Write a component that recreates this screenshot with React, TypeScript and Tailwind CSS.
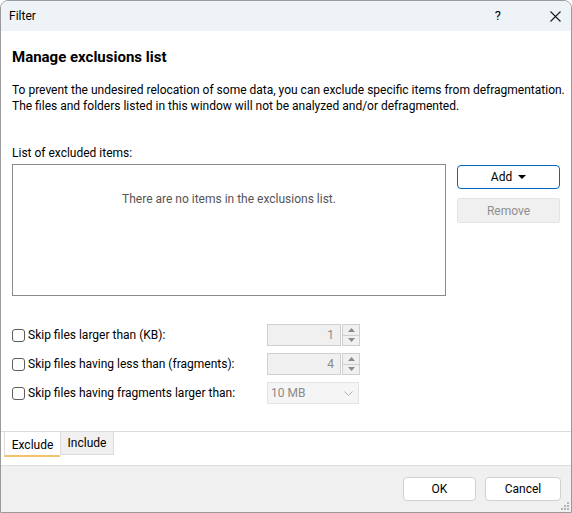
import React from "react";

const font = { fontFamily: '"Segoe UI", Roboto, "Noto Sans", sans-serif' };

function Check({ label }: { label: string }) {
  return (
    <div className="flex items-center h-[22px]">
      <div className="w-[13px] h-[13px] border border-[#5e5e5e] rounded-[3px] bg-white" />
      <span className="ml-[3px] text-[12px] text-black leading-[16px]">{label}</span>
    </div>
  );
}

function Spin({ value }: { value: string }) {
  return (
    <div className="flex h-[22px]">
      <div className="w-[74px] h-[22px] border border-[#cfcfcf] bg-[#f0f0f0] flex items-center justify-end pr-[6px] text-[12px] text-[#8a8a8a]">
        {value}
      </div>
      <div className="w-[18px] h-[22px] ml-[1px] border border-[#cfcfcf] bg-[#f0f0f0] flex flex-col">
        <div className="flex-1 flex items-center justify-center border-b border-[#cfcfcf]">
          <svg width="7" height="4" viewBox="0 0 7 4"><path d="M0 4 L3.5 0 L7 4 Z" fill="#8a8a8a" /></svg>
        </div>
        <div className="flex-1 flex items-center justify-center">
          <svg width="7" height="4" viewBox="0 0 7 4"><path d="M0 0 L3.5 4 L7 0 Z" fill="#8a8a8a" /></svg>
        </div>
      </div>
    </div>
  );
}

export default function App() {
  return (
    <div style={font} className="w-[572px] h-[513px] flex flex-col border border-[#9a9a9a] rounded-t-[8px] overflow-hidden bg-white text-black">
      {/* Title bar */}
      <div className="h-[30px] bg-[#eef3f8] flex items-center pl-[8px] shrink-0">
        <span className="text-[12px]">Filter</span>
        <span className="ml-auto text-[13px] mr-[49px]">?</span>
        <svg width="11" height="11" viewBox="0 0 11 11" className="mr-[10px]">
          <path d="M0.5 0.5 L10.5 10.5 M10.5 0.5 L0.5 10.5" stroke="#1a1a1a" strokeWidth="1.1" />
        </svg>
      </div>

      {/* Content */}
      <div className="flex-1 flex flex-col pl-[11px] pr-[11px]">
        <div className="mt-[16px] text-[15px] font-bold leading-[20px]">Manage exclusions list</div>
        <div className="mt-[15px] text-[12px] leading-[16px] whitespace-nowrap">
          <div>To prevent the undesired relocation of some data, you can exclude specific items from defragmentation.</div>
          <div>The files and folders listed in this window will not be analyzed and/or defragmented.</div>
        </div>
        <div className="mt-[31px] text-[12px] leading-[16px]">List of excluded items:</div>
        <div className="mt-[3px] flex">
          <div className="w-[435px] h-[132px] border border-[#8a8a8a] flex justify-center pt-[26px]">
            <span className="text-[12px] leading-[16px] text-[#555555]">There are no items in the exclusions list.</span>
          </div>
          <div className="ml-[11px] flex flex-col">
            <div className="mt-[1px] w-[103px] h-[24px] border border-[#0067c0] rounded-[4px] flex items-center justify-center text-[12px]">
              Add
              <svg width="8" height="4" viewBox="0 0 8 4" className="ml-[6px]"><path d="M0 0 L8 0 L4 4 Z" fill="#000" /></svg>
            </div>
            <div className="mt-[9px] w-[103px] h-[25px] border border-[#e3e3e3] bg-[#f0f0f0] rounded-[2px] flex items-center justify-center text-[12px] text-[#8f8f8f]">
              Remove
            </div>
          </div>
        </div>

        <div className="mt-[28px] flex flex-col gap-[7px]">
          <div className="flex items-center">
            <div className="w-[255px]"><Check label="Skip files larger than (KB):" /></div>
            <Spin value="1" />
          </div>
          <div className="flex items-center">
            <div className="w-[255px]"><Check label="Skip files having less than (fragments):" /></div>
            <Spin value="4" />
          </div>
          <div className="flex items-center">
            <div className="w-[255px]"><Check label="Skip files having fragments larger than:" /></div>
            <div className="w-[92px] h-[22px] border border-[#e3e3e3] bg-[#f5f5f5] flex items-center pl-[3px] pr-[5px] text-[12px] text-[#8a8a8a]">
              10 MB
              <svg width="9" height="5" viewBox="0 0 9 5" className="ml-auto"><path d="M0.5 0.5 L4.5 4.5 L8.5 0.5" stroke="#b0b0b0" fill="none" /></svg>
            </div>
          </div>
        </div>
      </div>

      {/* Tabs */}
      <div className="h-[34px] shrink-0 border-t border-[#dcdcdc] flex items-start pl-[3px]">
        <div className="w-[56px] h-[25px] bg-white border-l border-[#dcdcdc] border-b-2 border-b-[#f5c26b] flex items-center justify-center pt-[3px] text-[12px]">
          Exclude
        </div>
        <div className="w-[54px] h-[23px] bg-[#f0f0f0] border border-t-0 border-[#dcdcdc] flex items-center justify-center text-[12px]">
          Include
        </div>
      </div>

      {/* Footer */}
      <div className="h-[47px] shrink-0 bg-[#f0f0f0] border-t border-[#dcdcdc] flex items-start justify-end pr-[10px] pt-[11px] relative">
        <div className="w-[73px] h-[24px] bg-white border border-[#d0d0d0] rounded-[4px] flex items-center justify-center text-[12px]">OK</div>
        <div className="ml-[9px] w-[76px] h-[24px] bg-white border border-[#d0d0d0] rounded-[4px] flex items-center justify-center text-[12px]">Cancel</div>
        <svg width="10" height="10" viewBox="0 0 10 10" className="absolute right-[1px] bottom-[1px]">
          <rect x="7" y="1" width="2" height="2" fill="#b5b5b5" />
          <rect x="4" y="4" width="2" height="2" fill="#b5b5b5" />
          <rect x="7" y="4" width="2" height="2" fill="#b5b5b5" />
          <rect x="1" y="7" width="2" height="2" fill="#b5b5b5" />
          <rect x="4" y="7" width="2" height="2" fill="#b5b5b5" />
          <rect x="7" y="7" width="2" height="2" fill="#b5b5b5" />
        </svg>
      </div>
    </div>
  );
}
